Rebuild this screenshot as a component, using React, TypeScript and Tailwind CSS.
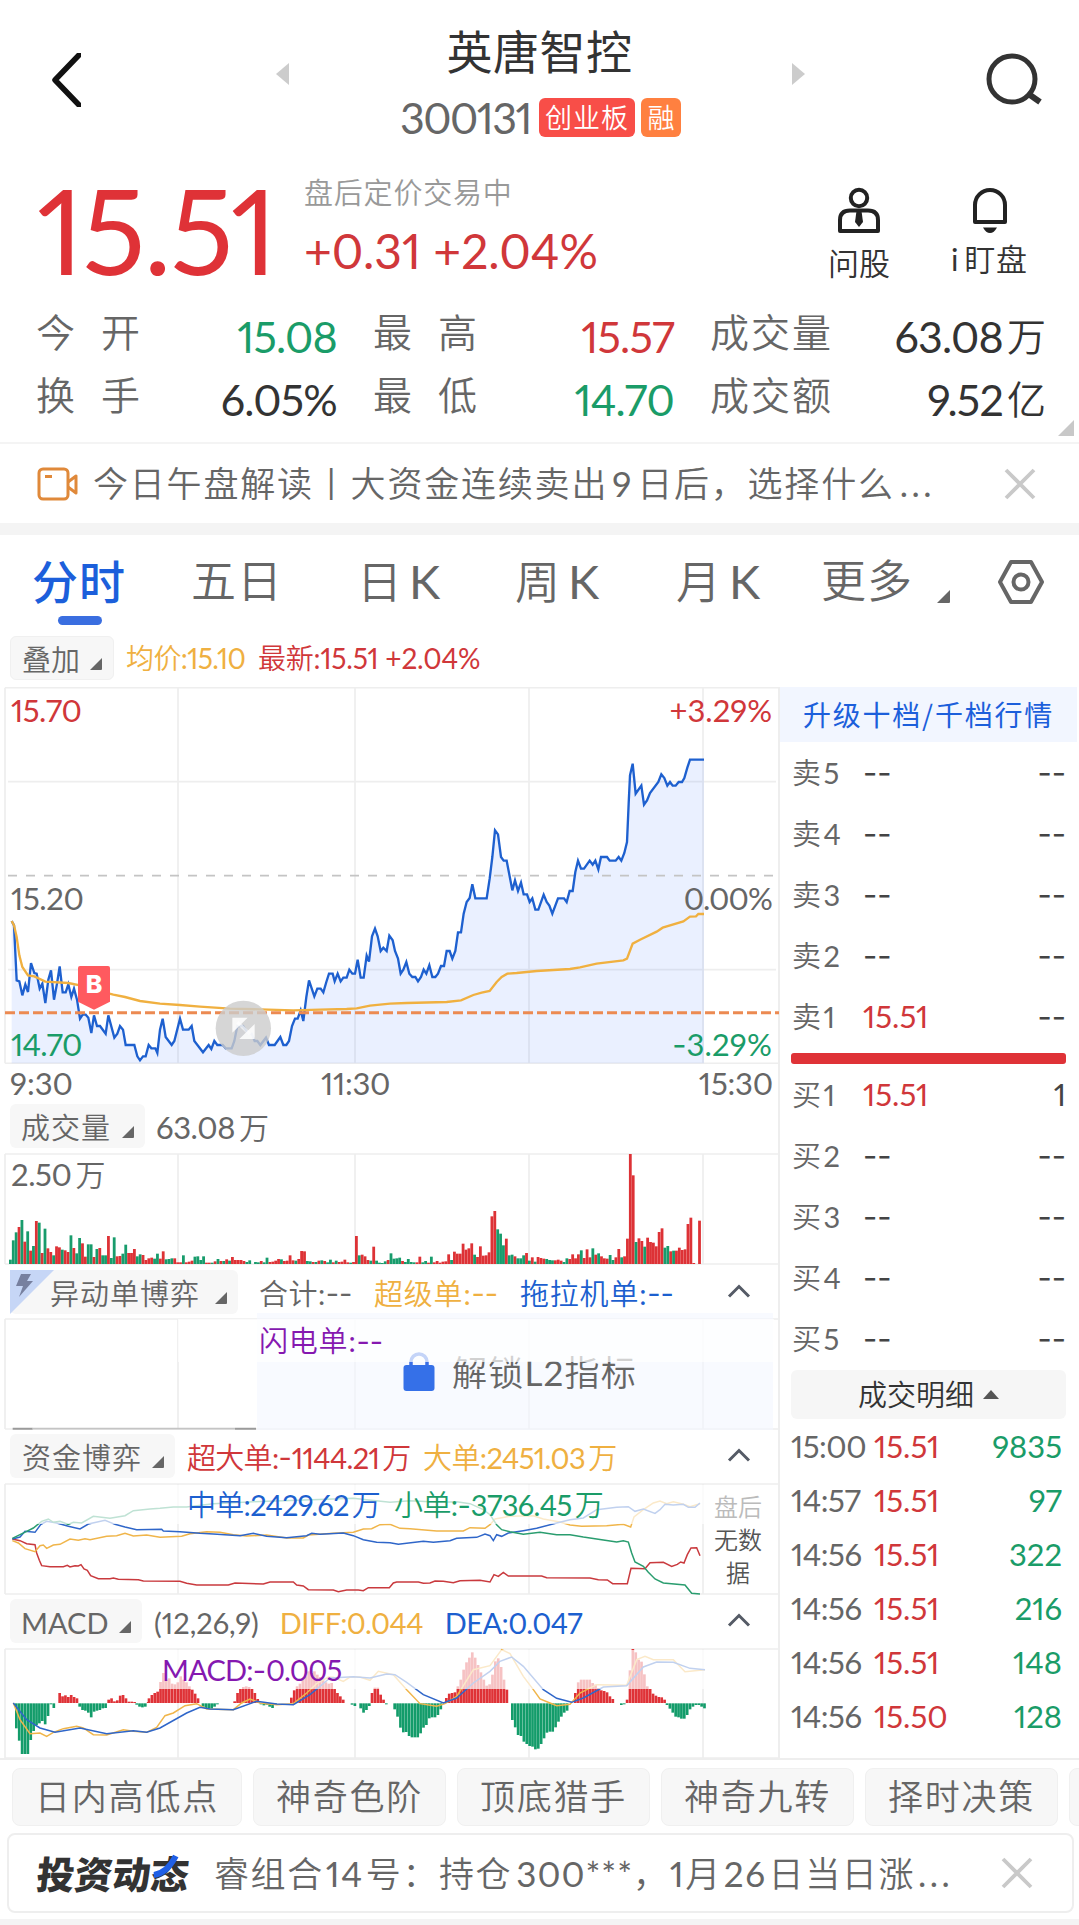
import React from "react";

// one entry per minute: bar height + direction (r = up, g = down)
const volume =
  "13g 71g 95g 111r 132g 67r 98g 40r 54g 129r 124g 33r 106g 47r 36r 26g 53r 50r 43g 41r 36r 86g 48r 32g 78g 62r 22r 59g 59g 21r 45g 48r 26g 26g 84r 18g 80g 23r 24r 31g 58g 33r 33r 45r 23g 29g 27r 12r 17r 19r 16g 31g 16r 38r 14g 15g 17g 17r 5r 5r 26g 5r 7r 10r 22g 23g 12g 23g 4r 4r 4g 8r 15g 9r 9g 14r 10g 21r 12r 12r 12r 9r 6g 11g 0g 6g 5g 9r 5g 19g 6r 7r 10r 15r 14g 9r 10r 26r 11r 10g 15r 39r 38r 9g 8g 6r 6g 10r 11g 9r 5g 13g 5r 10g 6r 7r 13r 5r 4g 6r 84r 26g 28r 23r 12r 10g 52r 10g 4g 3g 8g 12r 32g 16g 17g 19g 9r 6g 15g 6g 5g 5r 22r 5g 9g 4r 22g 5r 9r 4r 7r 8r 29r 12g 37r 31r 31r 61r 43r 47r 62r 28g 21r 53r 25r 26r 35r 143r 159r 104g 91g 56g 76r 26g 28g 23r 17g 17g 26g 33r 10g 20r 7g 21r 18r 16r 15g 12g 11g 11r 13r 10r 6g 17g 15r 29r 17r 29r 41g 18r 44r 20r 47g 28r 32g 23r 17r 16r 27g 12g 20r 45r 20g 23r 76r 330r 266r 66g 77r 69r 52g 79r 66r 64r 53r 96r 107r 49g 54g 38r 40g 40r 49r 42r 44r 120r 139r 3r 0r 130r".split(" ");

// [start x, bar heights], negative values hang below the zero line
const macdBars: [number, number[]][] = [
  [45, [-75, -112, -152, -152, -152, -110, -83, -65, -60, -53, -63, -38, -3, -14]],
  [175, [30, 20, 23, 18, 24, 18, 14]],
  [235, [-10, -20, -22, -28, -42, -25, -22, -20, -15, -14]],
  [322, [10, 14, 5, 8, 22, 24, 14, 4, 4, 3]],
  [406, [-4, -10, -12, -10, 3]],
  [443, [14, 24, 30, 34, 63, 90, 70, 74, 58, 56, 62, 80, 70, 62, 50, 40, 28, 14]],
  [605, [-10, -14, -15, -16, -10, -3]],
  [700, [5, 30, 42, 48, 50, 48, 42, 30, 12]],
  [779, [-3, -6, -4, -10, -14, -5]],
  [870, [16, 38, 50, 58, 75, 80, 95, 90, 95, 85, 78, 70, 62, 58, 60, 42, 30, 20, 10]],
  [1052, [-4, -8]],
  [1078, [-15, -28, -20, -8]],
  [1112, [30, 46, 46, 25, 10]],
  [1155, [-3]],
  [1180, [-18, -40, -73, -87, -86, -98, -102, -102, -102, -90, -73, -65, -45, -42, -42, -35, -18]],
  [1335, [15, 28, 30, 32, 50, 70, 100, 122, 136, 152, 136, 114, 92, 70, 52, 56, 85, 125, 134, 108, 70, 40]],
  [1533, [-50, -72, -95, -98, -115, -122, -128, -130, -138, -136, -122, -105, -88, -85, -85, -72, -55, -40, -28, -22]],
  [1722, [30, 62, 70, 70, 70, 70, 60, 55, 45, 38, 36, 32, 20, 12]],
  [1860, [-5, -3, 10, 98, 162, 152, 130, 124, 86, 50, 42, 28, 22, 18, 17, 10]],
  [1997, [-5, -16, -28, -40, -42, -46, -46, -35, -18, -10, -5, -5, -10, -15]],
];

const pricePts =
  "35,722 42,735 50,900 58,903 67,945 76,912 84,935 93,848 103,878 110,880 119,925 127,910 136,968 145,898 153,870 162,958 171,910 179,858 188,936 197,936 205,912 214,950 222,925 231,958 240,1015 248,1003 257,1003 265,1012 274,1058 282,1005 291,1037 300,1037 317,1060 325,1005 343,1072 352,1060 360,1037 369,1048 377,1094 403,1094 412,1128 420,1140 429,1128 437,1128 446,1094 454,1104 466,1104 472,1118 480,1048 488,1015 497,1070 515,1094 523,1082 540,1015 549,1048 566,1048 575,1037 583,1082 609,1116 626,1094 634,1106 643,1082 652,1094 668,1094 677,1104 695,1104 703,1082 712,1037 729,1037 745,1060 755,1060 764,1082 772,1082 781,1094 798,1072 807,1094 824,1094 841,1070 850,1094 859,1094 867,1082 876,1037 885,1015 893,1015 902,990 910,1022 919,950 927,900 943,948 952,925 962,925 970,936 979,905 987,880 998,880 1004,903 1013,880 1022,903 1030,892 1040,892 1048,868 1057,880 1065,880 1073,838 1082,892 1091,892 1100,826 1107,844 1116,768 1125,745 1133,768 1142,812 1150,802 1160,812 1168,766 1178,780 1185,812 1194,835 1202,880 1210,868 1219,845 1228,880 1237,890 1246,890 1254,903 1263,890 1271,868 1279,880 1288,855 1297,890 1306,890 1314,880 1323,857 1332,857 1340,812 1349,812 1357,835 1366,812 1374,756 1383,756 1391,700 1400,665 1409,653 1417,612 1426,654 1460,654 1469,595 1477,530 1485,450 1494,462 1503,530 1511,541 1520,541 1537,630 1545,600 1554,632 1563,607 1571,642 1581,642 1589,665 1597,654 1606,688 1615,688 1631,643 1640,665 1648,676 1657,700 1674,654 1692,654 1700,665 1709,632 1718,632 1726,575 1734,541 1743,565 1752,565 1769,541 1778,553 1786,541 1795,567 1803,530 1821,530 1829,541 1847,541 1856,530 1864,541 1873,518 1881,485 1886,370 1890,285 1898,250 1907,340 1924,316 1932,373 1941,360 1950,338 1975,305 1984,282 1993,293 2002,316 2010,305 2018,316 2027,316 2036,305 2046,305 2053,293 2062,262 2070,238 2112,238";

const avgPts =
  "35,722 42,735 50,770 58,825 67,860 84,885 103,888 136,904 205,908 240,915 290,930 340,943 375,950 420,962 480,970 540,974 600,979 690,985 780,987 880,990 960,988 1040,986 1070,984 1110,976 1170,970 1220,968 1340,965 1383,960 1420,944 1445,937 1469,932 1490,905 1505,890 1522,880 1550,878 1610,872 1710,866 1740,861 1790,850 1870,840 1881,835 1898,790 1920,778 1970,754 1988,742 2050,723 2070,709 2088,708 2095,701 2112,701";

const flowLines = [
  {
    color: "#c93a3e",
    pts: "37,328 60,333 80,342 105,345 110,370 118,392 125,408 150,411 190,411 202,407 210,412 225,408 235,409 243,405 252,418 262,422 272,438 295,447 330,447 340,445 355,449 415,450 430,454 540,455 560,461 590,466 685,466 705,460 790,463 810,457 880,457 890,466 910,469 925,480 1000,481 1015,486 1040,481 1075,481 1090,483 1105,474 1168,474 1180,460 1190,457 1255,457 1270,461 1290,460 1305,454 1330,455 1360,459 1380,453 1440,452 1470,457 1482,435 1495,440 1510,428 1525,439 1625,439 1640,444 1770,445 1795,450 1822,451 1838,462 1882,462 1893,416 1935,417 1950,399 1990,398 2015,410 2032,404 2042,397 2052,400 2062,375 2073,355 2090,354 2100,378",
  },
  {
    color: "#f0b54a",
    pts: "37,333 55,340 75,357 105,366 120,348 130,346 140,356 160,346 180,344 210,328 235,332 255,327 270,330 320,320 350,318 375,311 400,319 440,316 480,323 545,320 570,312 620,306 660,308 700,315 740,319 800,316 860,325 910,325 925,316 1000,311 1060,308 1090,298 1115,297 1140,285 1170,284 1200,296 1230,297 1310,304 1390,304 1410,294 1455,296 1470,285 1485,268 1530,260 1600,258 1630,268 1680,277 1710,286 1745,290 1820,288 1870,284 1892,292 1902,262 1930,240 1960,220 1980,214 2000,222 2020,216 2050,224 2070,231 2100,222",
  },
  {
    color: "#2f66c9",
    pts: "37,328 60,322 75,305 105,308 122,285 140,275 170,280 205,290 240,298 265,283 315,272 345,284 375,292 410,300 485,299 490,304 540,306 600,311 640,313 720,318 760,311 800,320 860,324 920,318 935,311 960,314 1030,310 1060,318 1090,330 1130,338 1170,339 1195,344 1270,335 1300,338 1350,333 1370,326 1430,323 1455,313 1470,318 1480,333 1490,315 1505,320 1525,310 1570,303 1610,296 1670,280 1710,270 1750,265 1790,240 1850,233 1885,231 1905,245 1930,238 1965,251 1980,240 1995,224 2020,226 2050,224 2065,233 2085,233 2100,220",
  },
  {
    color: "#2a9d6f",
    pts: "37,326 60,315 80,305 100,295 125,275 145,268 160,278 180,275 205,284 220,278 245,280 280,260 330,266 375,258 400,243 450,238 480,236 520,232 560,232 640,222 760,216 1000,208 1060,206 1100,210 1170,218 1230,213 1320,218 1370,216 1410,222 1450,240 1470,255 1490,285 1505,300 1530,306 1570,314 1620,308 1670,315 1710,315 1750,322 1810,331 1850,337 1870,333 1885,337 1895,370 1905,397 1930,410 1945,428 1965,448 1990,460 2055,466 2075,491 2100,493",
  },
];

const diffPts =
  "40,820 60,870 90,912 120,910 140,920 160,908 190,897 230,890 250,895 280,915 320,916 370,900 400,905 440,908 470,893 495,858 520,850 555,828 590,822 620,838 700,840 725,820 750,808 780,820 830,825 880,822 920,790 950,762 985,742 1000,743 1030,755 1050,742 1080,742 1110,752 1135,725 1180,735 1220,780 1260,822 1310,830 1335,822 1370,800 1420,720 1470,708 1505,660 1530,672 1570,740 1600,780 1620,808 1650,820 1670,828 1710,824 1740,790 1790,765 1880,767 1910,690 1935,680 1960,690 2020,690 2055,726 2115,720";
const deaPts =
  "40,820 80,870 120,895 165,908 240,895 320,912 400,903 440,908 480,895 560,850 600,833 630,838 700,840 770,815 830,823 880,825 930,795 990,745 1060,741 1110,745 1160,733 1185,735 1220,758 1270,795 1330,820 1370,805 1420,760 1470,725 1500,695 1535,682 1570,710 1630,780 1670,806 1715,818 1750,805 1810,772 1880,768 1930,712 1970,697 2020,698 2070,716 2115,720";

const sells = [
  { name: "卖5", price: "--", qty: "--" },
  { name: "卖4", price: "--", qty: "--" },
  { name: "卖3", price: "--", qty: "--" },
  { name: "卖2", price: "--", qty: "--" },
  { name: "卖1", price: "15.51", qty: "--" },
];
const buys = [
  { name: "买1", price: "15.51", qty: "1" },
  { name: "买2", price: "--", qty: "--" },
  { name: "买3", price: "--", qty: "--" },
  { name: "买4", price: "--", qty: "--" },
  { name: "买5", price: "--", qty: "--" },
];
const trades = [
  { time: "15:00", price: "15.51", qty: "9835" },
  { time: "14:57", price: "15.51", qty: "97" },
  { time: "14:56", price: "15.51", qty: "322" },
  { time: "14:56", price: "15.51", qty: "216" },
  { time: "14:56", price: "15.51", qty: "148" },
  { time: "14:56", price: "15.50", qty: "128" },
];

const Tri: React.FC<{ className?: string }> = ({ className = "" }) => (
  <svg viewBox="0 0 12 12" className={`h-3 w-3 text-[#666] ${className}`}>
    <path d="M12 0V11Q12 12 11 12H0Z" fill="currentColor" />
  </svg>
);

const Chevron = () => (
  <svg viewBox="0 0 24 16" className="h-4 w-6" fill="none" stroke="#555b66" strokeWidth="3">
    <path d="M2 13.5L12 3.5L22 13.5" />
  </svg>
);

const Close = () => (
  <svg viewBox="0 0 32 32" className="h-8 w-8" fill="none" stroke="#c9c9c9" strokeWidth="3.8">
    <path d="M2 2L30 30M30 2L2 30" />
  </svg>
);

// long dashes, Lato's own hyphen is too short
const Dash: React.FC<{ n?: number }> = ({ n = 2 }) => (
  <span className="font-['Inter'] tracking-normal">{n === 2 ? "--" : "-"}</span>
);

// grey button at the left of every indicator header
const Picker: React.FC<{ label: string; className: string; textClass?: string }> = ({ label, className, textClass = "tracking-[1px]" }) => (
  <div className={`flex h-[44px] shrink-0 items-center justify-between rounded-md bg-[#f7f7f7] pr-[11px] ${className}`}>
    <span className={`mt-[2px] text-[29px] leading-none text-[#666] ${textClass}`}>{label}</span>
    <Tri className="mt-[11px]" />
  </div>
);

const Grid: React.FC<{ top: number; bottom: number }> = ({ top, bottom }) => (
  <path
    d={`M15 ${top}H2337M15 ${bottom}H2337M15 ${top}V${bottom}M534 ${top}V${bottom}M1065 ${top}V${bottom}M1587 ${top}V${bottom}M2109 ${top}V${bottom}`}
    stroke="#eeeeee"
    strokeWidth="5"
    fill="none"
  />
);

const Stat: React.FC<{ label: string[]; value: string; unit?: string; color: string; className: string }> = ({ label, value, unit, color, className }) => (
  <div className={`flex h-[63px] items-center justify-between ${className}`}>
    <span className="flex gap-[24px] text-[39px] leading-none tracking-[2px] text-[#666]">
      {label.map((l) => (
        <span key={l}>{l}</span>
      ))}
    </span>
    <span className={`mt-[8px] flex items-center text-[43px] leading-none tracking-[-0.8px] ${color}`}>
      {value}
      {unit && <span className="ml-[4px] text-[39px] leading-none tracking-normal">{unit}</span>}
    </span>
  </div>
);

const BookRow: React.FC<{ name: string; price: string; qty: string }> = ({ name, price, qty }) => (
  <div className="flex h-[61px] items-center text-[31px] leading-none text-[#444]">
    <span className="w-[71px] text-[29px] tracking-[2.5px] text-[#666]">{name}</span>
    {price === "--" ? <Dash /> : <span className="text-[#d0373a]">{price}</span>}
    <span className="-mr-px ml-auto">{qty === "--" ? <Dash /> : qty}</span>
  </div>
);

const App: React.FC = () => {
  return (
    <div className="relative h-[1925px] w-[1079px] overflow-hidden bg-white font-['Lato','Noto_Sans_CJK_SC_DemiLight','Noto_Sans_CJK_SC',sans-serif] whitespace-nowrap [font-feature-settings:'pnum'_1]">
      {/* Title bar */}
      <header className="flex h-[158px] items-start">
        <svg viewBox="0 0 30 54" className="mt-[53px] ml-[51px] h-[54px] w-[30px]" fill="none" stroke="#111" strokeWidth="5.5">
          <path d="M28 2L4 27L28 52" strokeLinejoin="round" strokeLinecap="round" />
        </svg>
        <svg viewBox="0 0 13 22" className="mt-[63px] ml-[195px] h-[22px] w-[13px]">
          <path d="M13 0V22L0 11Z" fill="#ccc" />
        </svg>
        <div className="flex flex-1 flex-col items-center pt-[24px]">
          <h1 className="-ml-[2px] font-['Noto_Sans_CJK_SC'] text-[46px] leading-[50px] font-normal tracking-[0.5px] text-[#333]">英唐智控</h1>
          <div className="mt-[24px] flex h-[39px] items-center">
            <span className="text-[43px] leading-none tracking-[-1.5px] text-[#666]">300131</span>
            <span className="ml-[8px] flex h-[39px] w-[96px] items-center justify-center rounded-md bg-[#f84e48] text-[27px] leading-none tracking-[1px] text-white">创业板</span>
            <span className="ml-[6px] flex h-[39px] w-[40px] items-center justify-center rounded-md bg-[#ff8040] text-[27px] leading-none text-white">融</span>
          </div>
        </div>
        <svg viewBox="0 0 13 22" className="mt-[63px] h-[22px] w-[13px]">
          <path d="M0 0V22L13 11Z" fill="#ccc" />
        </svg>
        <svg viewBox="0 0 60 56" className="mt-[53px] mr-[34px] ml-[180px] h-[56px] w-[60px]" fill="none" stroke="#333" strokeWidth="5">
          <circle cx="27" cy="26" r="23" />
          <path d="M45 42L55 49" strokeWidth="6" />
        </svg>
      </header>

      {/* Price */}
      <section className="flex h-[142px] items-start">
        <div className="mt-[13px] ml-[37px] w-[267px] text-[118px] leading-none tracking-[-2px] text-[#df3237]">15.51</div>
        <div className="flex-1">
          <div className="mt-[20px] text-[29px] leading-none tracking-[0.8px] text-[#999]">盘后定价交易中</div>
          <div className="mt-[20px] text-[48px] leading-none text-[#d0373a]">+0.31 +2.04%</div>
        </div>
        <div className="mt-[29px] flex w-[62px] flex-col items-center">
          <svg viewBox="0 0 44 46" className="h-[46px] w-[44px]" fill="none" stroke="#222" strokeWidth="4">
            <circle cx="22" cy="11" r="8.2" />
            <path d="M3 44V33Q3 23.500 13 23.500H31Q41 23.500 41 33V44Z" strokeLinejoin="round" />
            <path d="M19.500 24H24.500L26 35L22 40L18 35Z" fill="#222" stroke="none" />
          </svg>
          <span className="mt-[15px] text-[31px] leading-none text-[#333]">问股</span>
        </div>
        <div className="mt-[29px] mr-[51px] ml-[61px] flex w-[77px] flex-col items-center">
          <svg viewBox="0 0 36 46" className="h-[46px] w-[36px]" fill="none" stroke="#222" strokeWidth="4">
            <path d="M3 35V18A15 15 0 0 1 33 18V35Z" strokeLinejoin="round" />
            <path d="M11 40.500H25Q22 46 18 46T11 40.500Z" fill="#222" stroke="none" />
          </svg>
          <span className="mt-[11px] text-[31px] leading-none tracking-[0.8px] text-[#333]"><span className="mr-[5px]">i</span>盯盘</span>
        </div>
      </section>

      {/* Open / high / low */}
      <section className="relative h-[142px] pt-[1px]">
        <div className="flex pl-[36px]">
          <Stat label={["今", "开"]} value="15.08" color="text-[#1a9c68]" className="w-[301px]" />
          <Stat label={["最", "高"]} value="15.57" color="text-[#d0373a]" className="ml-[36px] w-[301px]" />
          <Stat label={["成交量"]} value="63.08" unit="万" color="text-[#333]" className="ml-[36px] w-[336px]" />
        </div>
        <div className="flex pl-[36px]">
          <Stat label={["换", "手"]} value="6.05%" color="text-[#333]" className="w-[301px]" />
          <Stat label={["最", "低"]} value="14.70" color="text-[#1a9c68]" className="ml-[36px] w-[301px]" />
          <Stat label={["成交额"]} value="9.52" unit="亿" color="text-[#333]" className="ml-[36px] w-[336px]" />
        </div>
        <svg viewBox="0 0 16 16" className="absolute right-[5px] bottom-[6px] h-4 w-4">
          <path d="M16 0V16H0Z" fill="#c8c8c8" />
        </svg>
      </section>

      {/* Video notice */}
      <section className="flex h-[93px] items-center border-t-2 border-b-[12px] border-[#f4f4f4] pr-[43px] pl-[37px]">
        <svg viewBox="0 0 42 34" className="h-[34px] w-[42px]" fill="none" stroke="#e0893a" strokeWidth="3">
          <rect x="2" y="2" width="29" height="30" rx="4" />
          <path d="M31 15L39 9V26L31 20M8 9.500H15" strokeLinejoin="round" />
        </svg>
        <span className="ml-[14px] text-[35px] leading-none tracking-[1.8px] text-[#666]">
          今日午盘解读丨大资金连续卖出<span className="mx-[4px]">9</span>日后，选择什么<span className="ml-[5px] tracking-[3.5px]">...</span>
        </span>
        <span className="ml-auto"><Close /></span>
      </section>

      {/* Period tabs */}
      <nav className="flex h-[99px] items-start pt-[22px] text-[45px] leading-[48px] tracking-[1px] text-[#666]">
        <div className="ml-[32px] flex w-[159px] flex-col">
          <span className="-mt-[2px] font-['Noto_Sans_CJK_SC'] text-[46px] font-medium text-[#1c5fdb]">分时</span>
          <span className="mt-[13px] ml-[26px] h-[9px] w-[44px] rounded-full bg-[#3a6ee0]" />
        </div>
        <span className="w-[166px]">五日</span>
        <span className="w-[158px]">日<span className="ml-[6px] text-[47px]">K</span></span>
        <span className="w-[161px]">周<span className="ml-[7px] text-[47px]">K</span></span>
        <span className="w-[145px]">月<span className="ml-[7px] text-[47px]">K</span></span>
        <span className="w-[116px]">更多</span>
        <Tri className="mt-[33px] h-[13px] w-[13px]" />
        <svg viewBox="0 0 48 46" className="mt-[2px] ml-[47px] h-[46px] w-[48px]" fill="none" stroke="#666" strokeWidth="4">
          <path d="M14 3H34L45 23L34 43H14L3 23Z" strokeLinejoin="round" />
          <circle cx="24" cy="23" r="7.500" />
        </svg>
      </nav>

      <div className="flex h-[53px] items-start pt-[2px] pl-[10px]">
        <Picker label="叠加" className="w-[104px] border border-[#f0f0f0] pl-[11px]" textClass="-mt-px" />
        <span className="ml-[12px] flex h-[44px] w-[132px] items-center text-[28px] leading-none tracking-[-0.6px] text-[#efb041]">均价:15.10</span>
        <span className="flex h-[44px] items-center text-[28px] leading-none tracking-[-0.2px] text-[#d0373a]">最新:15.51 +2.04%</span>
      </div>

      {/* Charts on the left, order book on the right */}
      <main className="flex h-[1073px] items-start border-b-2 border-[#eee]">
        <div className="h-[1072px] w-[780px] shrink-0 border-r-2 border-[#eee]">
          <div className="relative h-[377px]">
            <svg viewBox="0 20 2340 1131" className="absolute top-0 left-0 h-[377px] w-[780px]" fill="none">
              <Grid top={22} bottom={1149} />
              <path d="M24 304H2328M24 868H2328" stroke="#eeeeee" strokeWidth="5" />
              <polygon points={`${pricePts} 2112,1149 35,1149`} fill="#2f6bff" fillOpacity="0.1" />
              <path d="M24 586H2328" stroke="#c4c4c4" strokeWidth="5" strokeDasharray="27 27" />
              <polyline points={pricePts} stroke="#1e60cf" strokeWidth="7" />
              <polyline points={avgPts} stroke="#f0b040" strokeWidth="7" />
              <path d="M15 997H2337" stroke="#ec8a52" strokeWidth="9" strokeDasharray="30 12" />
              <circle cx="730" cy="1044" r="83" fill="#cccccc" fillOpacity="0.8" />
              <path d="M697 1012H743L697 1057ZM764 1076H718L764 1031Z" fill="#fff" fillOpacity="0.85" />
              <path d="M712 1026L750 1062" stroke="#fff" strokeWidth="10" strokeOpacity="0.6" />
              <path d="M240 857H324Q330 857 330 863V964L282 988L234 964V863Q234 857 240 857Z" fill="#ff5a5f" />
            </svg>
            <span className="absolute top-[285px] left-[78px] w-[32px] text-center font-['Inter'] text-[25px] leading-none font-extrabold text-white">B</span>
            <span className="absolute top-[8px] left-[11px] text-[31px] leading-none tracking-[-0.5px] text-[#d0373a]">15.70</span>
            <span className="absolute top-[196px] left-[11px] text-[31px] leading-none tracking-[-0.4px] text-[#666]">15.20</span>
            <span className="absolute top-[342px] left-[11px] text-[31px] leading-none tracking-[-0.8px] text-[#1a9c68]">14.70</span>
            <span className="absolute top-[8px] right-[6px] text-[31px] leading-none text-[#d0373a]">+3.29%</span>
            <span className="absolute top-[196px] right-[6px] text-[31px] leading-none tracking-[-0.9px] text-[#666]">0.00%</span>
            <span className="absolute top-[342px] right-[6px] text-[31px] leading-none tracking-[0.2px] text-[#1a9c68]"><Dash n={1} />3.29%</span>
          </div>

          <div className="flex h-[39px] items-center pr-[5px] pl-[10px] text-[31px] leading-none text-[#666]">
            <span className="w-[311px]">9:30</span>
            <span className="tracking-[-0.3px]">11:30</span>
            <span className="ml-auto tracking-[-0.2px]">15:30</span>
          </div>

          {/* Volume */}
          <div className="flex h-[50px] pt-px pl-[10px]">
            <Picker label="成交量" className="w-[135px] pl-[11px]" />
            <span className="mt-px ml-[11px] flex h-[44px] items-center text-[31px] leading-none tracking-[-0.4px] text-[#666]">63.08<span className="ml-[4px] text-[30px]">万</span></span>
          </div>
          <div className="relative h-[113px]">
            <svg viewBox="0 190 2340 339" className="absolute top-0 left-0 h-[113px] w-[780px]" fill="none">
              <Grid top={193} bottom={523} />
              {volume.map((v, i) => {
                const h = parseInt(v);
                return <rect key={i} x={27 + i * 8.65} y={523 - h} width="8.4" height={h} fill={v.endsWith("r") ? "#dd3236" : "#189c6c"} />;
              })}
            </svg>
            <span className="absolute top-[6px] left-[11px] text-[31px] leading-none tracking-[-0.4px] text-[#666]">2.50<span className="ml-[4px] text-[30px]">万</span></span>
          </div>

          {/* Abnormal orders */}
          <div className="flex h-[52px] items-start pt-[4px] pl-[10px] text-[29px] leading-none">
            <div className="relative">
              <Picker label="异动单博弈" className="w-[228px] pl-[40px]" />
              <svg viewBox="0 0 44 44" className="absolute top-0 left-0 h-[44px] w-[44px]">
                <path d="M0 0H44L0 44Z" fill="#c6d6f6" />
                <path d="M11 4H21L17 11H23L9 27L13 16H6Z" fill="#77809f" />
              </svg>
            </div>
            <span className="mt-px ml-[21px] flex h-[44px] w-[115px] items-center tracking-[0.5px] text-[#666]">合计:<Dash /></span>
            <span className="mt-px flex h-[44px] w-[146px] items-center tracking-[0.8px] text-[#efb041]">超级单:<Dash /></span>
            <span className="mt-px flex h-[44px] items-center tracking-[0.8px] text-[#1c5fcf]">拖拉机单:<Dash /></span>
            <span className="mt-[13px] mr-[27px] ml-auto"><Chevron /></span>
          </div>
          <div className="relative h-[113px]">
            <svg viewBox="0 685 2340 339" className="absolute top-0 left-0 h-[113px] w-[780px]" fill="none">
              <Grid top={688} bottom={1018} />
              <path d="M38 1017H98M705 1017H768" stroke="#9a9a9a" strokeWidth="6" />
              <path d="M98 1017H705" stroke="#c4c4c4" strokeWidth="5" />
            </svg>
            <div className="absolute -top-[5px] left-[257px] h-[117px] w-[516px] bg-[#f3f7ff]/60" />
            <div className="absolute top-[33px] left-[403px] flex items-center text-[35px] leading-none tracking-[1.2px] text-[#666]">
              <svg viewBox="0 0 32 40" className="h-10 w-8" fill="none">
                <path d="M8 16V11A8 8 0 0 1 24 11V16" stroke="#3a6fe6" strokeWidth="3.5" />
                <rect x="0.500" y="14" width="31" height="26" rx="3" fill="#3570e8" />
              </svg>
              <span className="mt-[2px] ml-[17px]">解锁L2指标</span>
            </div>
            <div className="absolute top-[1px] left-[178px] h-[43px] w-[596px] bg-white/70" />
            <span className="absolute top-[8px] left-[259px] text-[29px] leading-none tracking-[0.8px] text-[#8518b0]">闪电单:<Dash /></span>
          </div>

          {/* Money flow */}
          <div className="flex h-[52px] items-start pt-[3px] pl-[10px] text-[29px] leading-none">
            <Picker label="资金博弈" className="w-[165px] pl-[12px]" />
            <span className="mt-px ml-[12px] flex h-[44px] w-[236px] items-center tracking-[-0.7px] text-[#d0373a]">超大单:<Dash n={1} />1144.21<span className="ml-[3px]">万</span></span>
            <span className="mt-px flex h-[44px] items-center tracking-[-0.6px] text-[#efb041]">大单:2451.03<span className="ml-[3px]">万</span></span>
            <span className="mt-[13px] mr-[27px] ml-auto"><Chevron /></span>
          </div>
          <div className="relative h-[113px]">
            <svg viewBox="0 160 2340 339" className="absolute top-0 left-0 h-[113px] w-[780px]" fill="none">
              <Grid top={163} bottom={493} />
              {flowLines.map((l) => (
                <polyline key={l.color} points={l.pts} stroke={l.color} strokeWidth="4.5" />
              ))}
              <rect x="18" y="166" width="2316" height="117" fill="#fff" fillOpacity="0.7" />
            </svg>
            <span className="absolute top-[7px] left-[187px] text-[29px] leading-none tracking-[-0.7px] text-[#1c5fcf]">中单:2429.62<span className="ml-[3px]">万</span></span>
            <span className="absolute top-[7px] left-[394px] text-[29px] leading-none tracking-[-0.6px] text-[#1a9c68]">小单:<Dash n={1} />3736.45<span className="ml-[3px]">万</span></span>
            <div className="absolute top-[7px] right-[15px] flex w-[50px] flex-col items-center text-[24px] leading-[33px] text-[#555]">
              <span className="text-[#bbb]">盘后</span>
              <span>无数</span>
              <span>据</span>
            </div>
          </div>

          {/* MACD */}
          <div className="flex h-[52px] items-start pt-[3px] pl-[10px] text-[29px] leading-none">
            <Picker label="MACD" className="w-[132px] pl-[11px]" textClass="" />
            <span className="mt-px ml-[12px] flex h-[44px] items-center text-[#666]">(12,26,9)</span>
            <span className="mt-px ml-[21px] flex h-[44px] w-[165px] items-center tracking-[-0.6px] text-[#efb041]">DIFF:0.044</span>
            <span className="mt-px flex h-[44px] items-center tracking-[-0.6px] text-[#1c5fcf]">DEA:0.047</span>
            <span className="mt-[13px] mr-[27px] ml-auto"><Chevron /></span>
          </div>
          <div className="relative h-[112px]">
            <svg viewBox="0 655 2340 336" className="absolute top-0 left-0 h-[112px] w-[780px]" fill="none">
              <Grid top={658} bottom={985} />
              {macdBars.map(([x, bars]) =>
                bars.map((b, i) => (
                  <rect key={`${x}-${i}`} x={x + i * 8.65} y={b > 0 ? 820 - b : 821} width="8" height={Math.abs(b)} fill={b > 0 ? "#df3237" : "#139c6a"} />
                ))
              )}
              <polyline points={diffPts} stroke="#f0b54a" strokeWidth="4.5" />
              <polyline points={deaPts} stroke="#2f66c9" strokeWidth="4.5" />
              <rect x="18" y="661" width="2316" height="117" fill="#fff" fillOpacity="0.7" />
            </svg>
            <span className="absolute top-[7px] left-[162px] text-[29px] leading-none tracking-[-0.8px] text-[#8518b0]">MACD:<Dash n={1} />0.005</span>
          </div>
        </div>

        {/* Order book */}
        <aside className="w-[297px]">
          <div className="flex h-[55px] items-center justify-center bg-[#f2f6ff] pb-[2px] font-['Noto_Sans_CJK_SC'] text-[28px] leading-none tracking-[1.8px] text-[#1c5fdb]">升级十档/千档行情</div>
          <div className="pr-[12px] pl-[12px]">
            {sells.map((r) => (
              <BookRow key={r.name} {...r} />
            ))}
            <div className="-mr-px mt-[6px] -ml-px h-[11px] rounded-[3px] bg-[#df3237]" />
            {buys.map((r) => (
              <BookRow key={r.name} {...r} />
            ))}
          </div>
          <div className="mt-px mr-[11px] ml-[11px] flex h-[49px] items-center justify-center rounded-md bg-[#f6f6f6] text-[29px] leading-none text-[#333]">
            成交明细
            <svg viewBox="0 0 16 9" className="ml-[9px] h-[9px] w-4">
              <path d="M0 9L8 0L16 9Z" fill="#555" />
            </svg>
          </div>
          <div className="pr-[15px] pl-[11px]">
            {trades.map((t, i) => (
              <div key={i} className="flex h-[54px] items-center text-[31px] leading-none">
                <span className="w-[83px] tracking-[-0.5px] text-[#666]">{t.time}</span>
                <span className="text-[#d0373a]">{t.price}</span>
                <span className="ml-auto text-[#1a9c68]">{t.qty}</span>
              </div>
            ))}
          </div>
        </aside>
      </main>

      {/* Indicator shortcuts */}
      <div className="mt-[8px] flex h-[58px] gap-[11px] overflow-hidden pl-[12px] text-[35px] leading-none tracking-[1.8px] text-[#666]">
        <span className="flex w-[230px] shrink-0 items-center justify-center rounded-lg border border-[#f0f0f0] bg-[#f7f7f7] pb-[2px]">日内高低点</span>
        <span className="flex w-[193px] shrink-0 items-center justify-center rounded-lg border border-[#f0f0f0] bg-[#f7f7f7] pb-[2px]">神奇色阶</span>
        <span className="flex w-[193px] shrink-0 items-center justify-center rounded-lg border border-[#f0f0f0] bg-[#f7f7f7] pb-[2px]">顶底猎手</span>
        <span className="flex w-[193px] shrink-0 items-center justify-center rounded-lg border border-[#f0f0f0] bg-[#f7f7f7] pb-[2px]">神奇九转</span>
        <span className="flex w-[193px] shrink-0 items-center justify-center rounded-lg border border-[#f0f0f0] bg-[#f7f7f7] pb-[2px]">择时决策</span>
        <span className="w-[193px] shrink-0 rounded-lg border border-[#f0f0f0] bg-[#f7f7f7]" />
      </div>

      <div className="mt-[7px] mr-[5px] ml-[7px] flex h-[80px] items-center rounded-lg border-2 border-[#eee] pr-[39px] pl-[28px]">
        <span className="relative flex w-[152px] -skew-x-6 font-['Noto_Sans_CJK_SC'] text-[38px] leading-none font-black text-[#333]">
          投资动态
          <svg viewBox="0 0 28 24" className="absolute top-0 right-[9px] h-[24px] w-[28px]" fill="none">
            <path d="M2 21Q15 19 22 2" stroke="#1f5fe6" strokeWidth="6" />
          </svg>
        </span>
        <span className="ml-[25px] text-[35px] leading-none tracking-[1.6px] text-[#666]">
          睿组合<span className="mx-[2px]">14</span>号：持仓<span className="ml-[4px] tracking-[1px]">300***</span>，<span>1</span>月<span className="mx-[2px]">26</span>日当日涨<span className="ml-[3px] tracking-[3.5px]">...</span>
        </span>
        <span className="ml-auto"><Close /></span>
      </div>
      <div className="mt-[6px] h-[6px] bg-[#f4f4f4]" />
    </div>
  );
};

export default App;
